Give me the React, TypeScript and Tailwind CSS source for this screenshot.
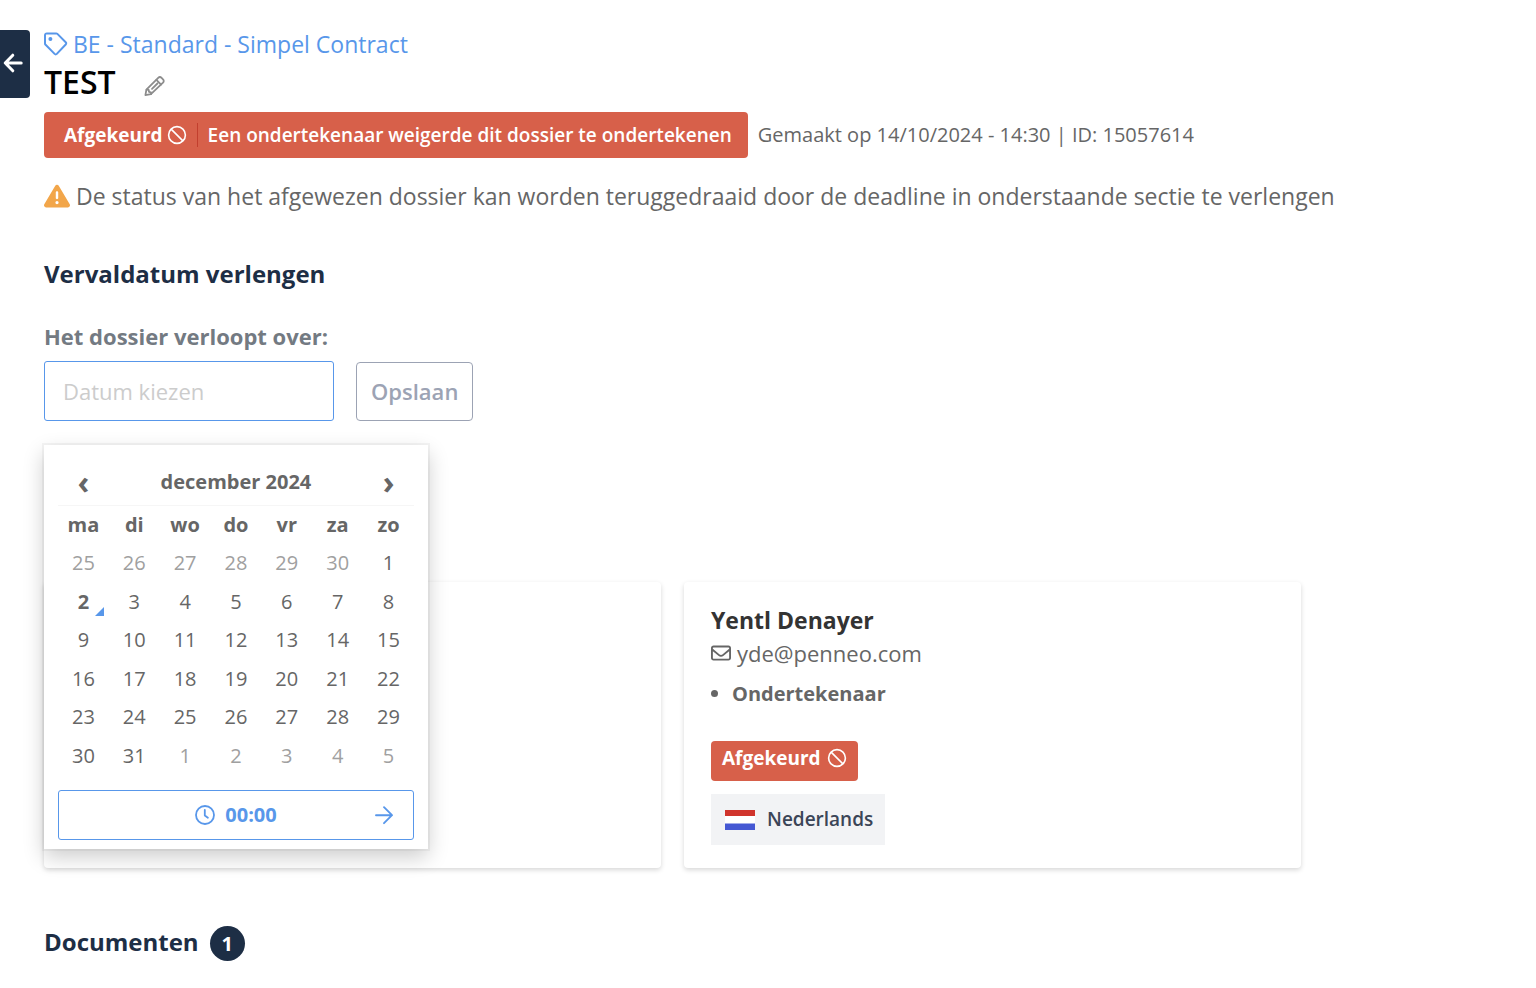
import { useState, type ReactNode } from 'react'
import { FaRegEnvelope, FaTriangleExclamation } from 'react-icons/fa6'
import { clsx } from 'clsx'

const WEEKDAYS = ['ma', 'di', 'wo', 'do', 'vr', 'za', 'zo']

interface Day {
  day: number
  outside: boolean
  today: boolean
}

// Six weeks starting on monday 25 november 2024
const WEEKS: Day[][] = Array.from({ length: 6 }, (_, week) =>
  Array.from({ length: 7 }, (_, i) => {
    const date = new Date(2024, 10, 25 + week * 7 + i)
    const outside = date.getMonth() !== 11
    return { day: date.getDate(), outside, today: !outside && date.getDate() === 2 }
  }),
)

function BackIcon() {
  return (
    <svg viewBox="0 0 20 20" className="size-5" fill="none" stroke="currentColor" strokeWidth="3" strokeLinecap="round" strokeLinejoin="round" aria-hidden="true">
      <path d="M18.2 10H2.4M9.8 2.2L2.2 10l7.6 7.8" />
    </svg>
  )
}

function TagIcon() {
  return (
    <svg viewBox="0 0 24 24" className="size-6 shrink-0" fill="none" stroke="currentColor" strokeWidth="2" strokeLinejoin="round" aria-hidden="true">
      <path d="M1 3.2C1 2.1 1.7 1.4 2.8 1.4h9.4c.5 0 .9.2 1.2.5l8.3 8.3c.7.7.7 1.6 0 2.3l-8.9 9.4c-.7.7-1.5.7-2.2 0L1.6 12.8c-.4-.4-.6-.9-.6-1.4z" />
      <circle cx="6.4" cy="6.9" r="2" fill="currentColor" stroke="none" />
    </svg>
  )
}

function PencilIcon() {
  return (
    <svg viewBox="0 0 22 22" className="size-[22px]" fill="none" stroke="currentColor" strokeWidth="1.8" strokeLinejoin="round" strokeLinecap="round" aria-hidden="true">
      <path d="M1.4 20.2l1-5.5L14.2 2.9c1-1 2.4-1 3.4 0l1.4 1.4c1 1 1 2.4 0 3.4L6.9 19.2z" />
      <path d="M12.4 4.9l4.7 4.7M2.6 14.7l2.1.2.3 2 2 .4v1.9M8 13.8l5.4-5.3" />
    </svg>
  )
}

function BanIcon() {
  return (
    <svg viewBox="0 0 20 20" className="size-5 shrink-0" fill="none" stroke="currentColor" strokeWidth="1.6" aria-hidden="true">
      <circle cx="10" cy="10" r="8.4" />
      <path d="M4.1 4.1l11.8 11.8" />
    </svg>
  )
}

function ClockIcon() {
  return (
    <svg viewBox="0 0 20 20" className="size-5" fill="none" stroke="currentColor" strokeWidth="1.8" strokeLinecap="round" strokeLinejoin="round" aria-hidden="true">
      <circle cx="10" cy="10" r="9" />
      <path d="M9.8 4.8v5.8l3.1 2.2" />
    </svg>
  )
}

function ArrowIcon() {
  return (
    <svg viewBox="0 0 20 20" className="size-5" fill="none" stroke="currentColor" strokeWidth="1.9" strokeLinecap="round" strokeLinejoin="round" aria-hidden="true">
      <path d="M2 10.2h16M10 2.2l8 8-8 8" />
    </svg>
  )
}

function DutchFlag() {
  return (
    <svg viewBox="0 0 30 20" className="h-5 w-[30px]" aria-hidden="true">
      <path fill="#d0342c" d="M0 0h30v7H0z" />
      <path fill="#fff" d="M0 6h30v8H0z" />
      <path fill="#4558d3" d="M0 13.5h30V20H0z" />
    </svg>
  )
}

function DatePicker() {
  return (
    <div className="absolute top-[84px] left-0 z-10 w-[384px] bg-white px-3.5 pt-3.5 pb-[9px] shadow-[0_0_0_2px_rgba(0,0,0,0.04),0_8px_20px_rgba(0,0,0,0.2)]">
      <table className="h-[316px] w-full table-fixed border-collapse text-center text-xl leading-[38px]">
        <thead>
          <tr className="h-[45px] border-b border-[#f6f6f6]">
            <th className="p-0">
              <button type="button" aria-label="Vorige maand" className="block w-full text-[32px] leading-[46px]">‹</button>
            </th>
            <th colSpan={5} className="p-0 leading-[46px]">december 2024</th>
            <th className="p-0">
              <button type="button" aria-label="Volgende maand" className="block w-full text-[32px] leading-[46px]">›</button>
            </th>
          </tr>
          <tr>
            {WEEKDAYS.map((name) => (
              <th key={name} className="p-0">{name}</th>
            ))}
          </tr>
        </thead>
        <tbody>
          {WEEKS.map((week, idx) => (
            <tr key={idx}>
              {week.map(({ day, outside, today }) => (
                <td key={day} className="relative p-0">
                  <button type="button" className={clsx('block w-full', outside && 'text-[#a0a0a0]', today && 'font-bold')}>
                    {day}
                  </button>
                  {today && (
                    <span className="absolute right-[5px] bottom-[5px] border-b-[9px] border-l-[9px] border-b-[#5897ea] border-l-transparent" />
                  )}
                </td>
              ))}
            </tr>
          ))}
        </tbody>
      </table>
      <button
        type="button"
        className="mt-[15px] grid h-[50px] w-full grid-cols-[1fr_auto_1fr] items-center rounded-[3px] border border-[#5897ea] px-[19px] text-xl font-bold text-[#5897ea]"
      >
        <span className="col-start-2 flex items-center gap-2.5">
          <ClockIcon />
          00:00
        </span>
        <span className="justify-self-end">
          <ArrowIcon />
        </span>
      </button>
    </div>
  )
}

function Card({ children }: { children?: ReactNode }) {
  return (
    <article className="min-h-[286px] rounded bg-white px-[27px] pt-[21px] pb-[22px] shadow-[0_2px_5px_rgba(0,0,0,0.16)]">
      {children}
    </article>
  )
}

export default function App() {
  const [date, setDate] = useState('')

  return (
    <div className="flex items-start bg-white font-['Open_Sans',sans-serif] text-[#666]">
      <button
        type="button"
        aria-label="Terug"
        className="mt-[30px] flex h-[68px] w-[30px] shrink-0 items-center rounded-r bg-[#1d2e45] pb-0.5 pl-[3px] text-white"
      >
        <BackIcon />
      </button>

      <main className="min-w-0 flex-1 pt-[27px] pr-7 pb-6 pl-3.5">
        <a href="#" className="flex items-center gap-[5px] text-[23px] leading-[34px] text-[#5897ea]">
          <TagIcon />
          BE - Standard - Simpel Contract
        </a>

        <div className="flex items-center gap-7">
          <h1 className="text-[32px] leading-[42px] font-semibold text-black">TEST</h1>
          <button type="button" aria-label="Naam wijzigen" className="pt-2 text-[#8c8c8c]">
            <PencilIcon />
          </button>
        </div>

        <div className="mt-[9px] flex items-center gap-2.5">
          <div className="flex h-[46px] items-center rounded bg-[#d7604a] pr-4 pl-5 text-[19px] font-semibold text-white">
            <span className="flex items-center gap-1 font-bold">
              Afgekeurd
              <BanIcon />
            </span>
            <span className="mx-2.5 h-6 w-px bg-[#c23f2e]" />
            Een ondertekenaar weigerde dit dossier te ondertekenen
          </div>
          <p className="text-xl">Gemaakt op 14/10/2024 - 14:30 | ID: 15057614</p>
        </div>

        <p className="mt-[21px] flex items-center gap-1.5 text-[23px] leading-[34px]">
          <FaTriangleExclamation className="size-[26px] shrink-0 text-[#f2a64a]" />
          De status van het afgewezen dossier kan worden teruggedraaid door de deadline in onderstaande sectie te verlengen
        </p>

        <h2 className="mt-11 text-2xl leading-[34px] font-bold text-[#1d2e45]">Vervaldatum verlengen</h2>

        <label htmlFor="expires" className="mt-7 block text-[22px] leading-[34px] font-bold text-[#737a82]">
          Het dossier verloopt over:
        </label>
        <div className="relative mt-2 flex items-center gap-[22px]">
          <input
            id="expires"
            type="text"
            value={date}
            onChange={(e) => setDate(e.target.value)}
            placeholder="Datum kiezen"
            className="h-[60px] w-[290px] rounded-[3px] border border-[#5897ea] px-[18px] text-[22px] outline-none placeholder:text-[#ccc]"
          />
          <button type="button" className="h-[59px] rounded border border-[#9ca3b4] px-3.5 text-[22px] font-semibold text-[#9ca3b4]">
            Opslaan
          </button>
          <DatePicker />
        </div>

        <section className="mt-[161px] grid max-w-[1257px] grid-cols-2 gap-[23px]">
          <Card />
          <Card>
            <h3 className="text-[23px] leading-[34px] font-bold text-[#333]">Yentl Denayer</h3>
            <p className="flex items-center gap-1.5 text-[22px] leading-[32px]">
              <FaRegEnvelope className="size-5" />
              yde@penneo.com
            </p>
            <ul className="mt-1.5 list-disc pl-[21px] text-xl leading-[38px] font-bold">
              <li>Ondertekenaar</li>
            </ul>
            <div className="mt-7 flex h-10 w-fit items-center gap-1.5 rounded bg-[#d7604a] px-[11px] pb-1.5 text-[19px] font-bold text-white">
              Afgekeurd
              <BanIcon />
            </div>
            <div className="mt-[13px] flex h-[51px] w-fit items-center gap-3 bg-[#f2f3f5] pr-3 pl-3.5 text-[19px] font-semibold text-[#3b4557]">
              <DutchFlag />
              Nederlands
            </div>
          </Card>
        </section>

        <h2 className="mt-[58px] flex items-start gap-[11px] text-2xl font-bold text-[#1d2e45]">
          Documenten
          <span className="flex size-[35px] items-center justify-center rounded-full bg-[#1d2e45] text-xl text-white">1</span>
        </h2>
      </main>
    </div>
  )
}
